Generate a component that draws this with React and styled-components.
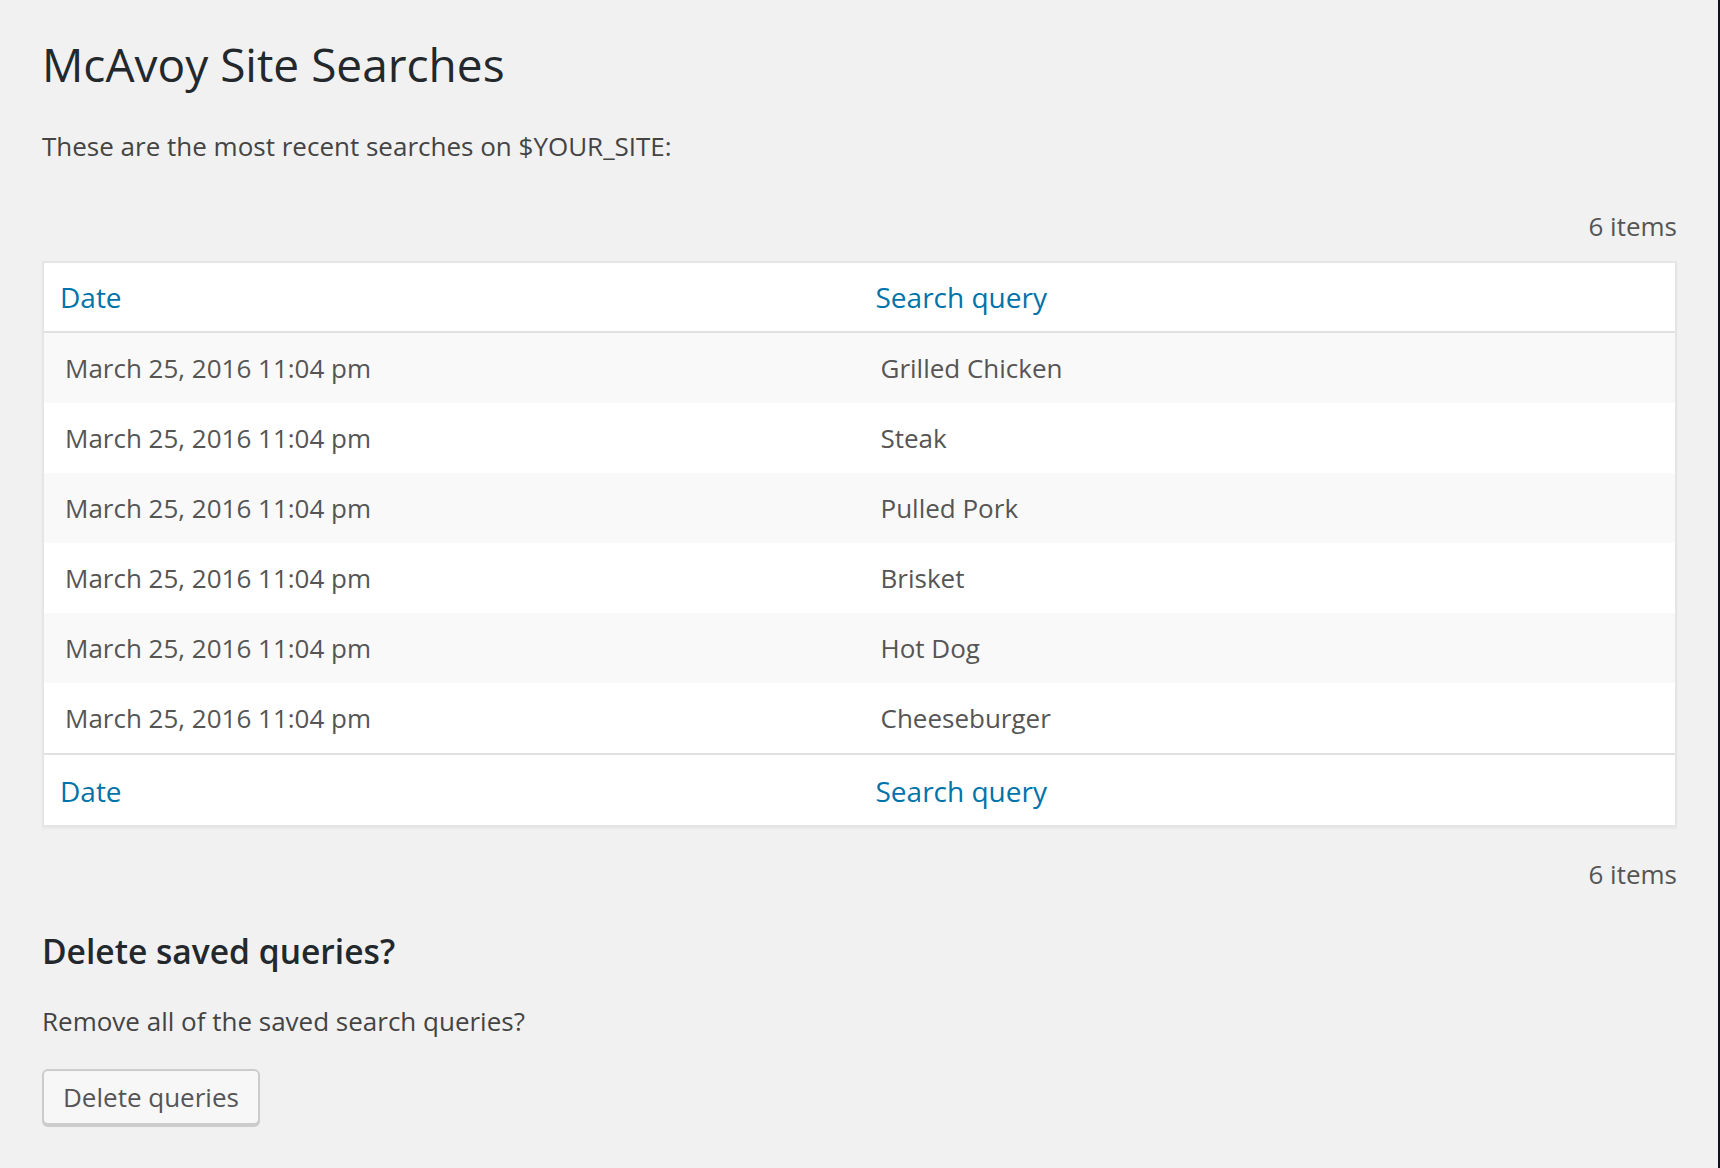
import React from "react";
import styled, { createGlobalStyle } from "styled-components";

const GlobalStyle = createGlobalStyle`
  html, body {
    margin: 0;
    padding: 0;
    background: #f1f1f1;
  }
  body {
    font-family: "Open Sans", "Noto Sans", sans-serif;
    font-size: 26px;
    color: #444;
    min-height: 100vh;
    box-sizing: border-box;
    border-right: 2px solid #0d121c;
  }
`;

const Wrap = styled.div`
  padding: 0 41px 40px 42px;
`;

const Title = styled.h1`
  margin: 0;
  padding: 35px 0 10px;
  font-size: 46px;
  line-height: 58px;
  font-weight: 400;
  color: #23282d;
`;

const Text = styled.p`
  margin: ${(p) => p.$top || 0}px 0 0;
  font-size: 26px;
  line-height: 39px;
  color: #444;
`;

const TableNav = styled.div`
  display: flex;
  justify-content: flex-end;
  align-items: center;
  height: 52px;
  margin-top: ${(p) => p.$top}px;
  color: #555;
  font-size: 26px;
`;

const Table = styled.table`
  width: 100%;
  margin-top: 9px;
  border-spacing: 0;
  table-layout: fixed;
  background: #fff;
  border: 2px solid #e5e5e5;
  box-shadow: 0 2px 2px rgba(0, 0, 0, 0.04);
`;

const HeadCell = styled.th`
  box-sizing: border-box;
  text-align: left;
  font-weight: 400;
  height: ${(p) => (p.$foot ? 72 : 70)}px;
  padding: ${(p) => (p.$foot ? "2px 16px 0" : "0 16px")};
  ${(p) =>
    p.$foot
      ? "border-top: 2px solid #e1e1e1;"
      : "border-bottom: 2px solid #e1e1e1;"}
`;

const SortLink = styled.a`
  color: #0073aa;
  text-decoration: none;
  font-size: 28px;
  line-height: 40px;
`;

const Row = styled.tr`
  background: ${(p) => (p.$alt ? "#f9f9f9" : "#fff")};
`;

const Cell = styled.td`
  height: 70px;
  padding: 0 20px 0 21px;
  color: #555;
  font-size: 26px;
  line-height: 39px;
`;

const SubTitle = styled.h2`
  margin: 29px 0 0;
  font-size: 33.6px;
  line-height: 44px;
  font-weight: 600;
  color: #23282d;
`;

const Button = styled.button`
  margin-top: 28px;
  height: 56px;
  padding: 0 19px 2px;
  font-family: inherit;
  font-size: 26px;
  line-height: 52px;
  color: #555;
  background: #f7f7f7;
  border: 2px solid #ccc;
  border-radius: 6px;
  box-shadow: 0 2px 0 #ccc;
  cursor: pointer;
`;

const searches = [
  "Grilled Chicken",
  "Steak",
  "Pulled Pork",
  "Brisket",
  "Hot Dog",
  "Cheeseburger",
];

const App = () => {
  return (
    <>
      <GlobalStyle />
      <Wrap>
        <Title>McAvoy Site Searches</Title>
        <Text $top={24}>These are the most recent searches on $YOUR_SITE:</Text>
        <TableNav $top={34}>6 items</TableNav>
        <Table>
          <thead>
            <tr>
              <HeadCell>
                <SortLink href="#">Date</SortLink>
              </HeadCell>
              <HeadCell>
                <SortLink href="#">Search query</SortLink>
              </HeadCell>
            </tr>
          </thead>
          <tbody>
            {searches.map((query, i) => (
              <Row key={query} $alt={i % 2 === 0}>
                <Cell>March 25, 2016 11:04 pm</Cell>
                <Cell>{query}</Cell>
              </Row>
            ))}
          </tbody>
          <tfoot>
            <tr>
              <HeadCell $foot>
                <SortLink href="#">Date</SortLink>
              </HeadCell>
              <HeadCell $foot>
                <SortLink href="#">Search query</SortLink>
              </HeadCell>
            </tr>
          </tfoot>
        </Table>
        <TableNav $top={21}>6 items</TableNav>
        <SubTitle>Delete saved queries?</SubTitle>
        <Text $top={29}>Remove all of the saved search queries?</Text>
        <Button>Delete queries</Button>
      </Wrap>
    </>
  );
};

export default App;
